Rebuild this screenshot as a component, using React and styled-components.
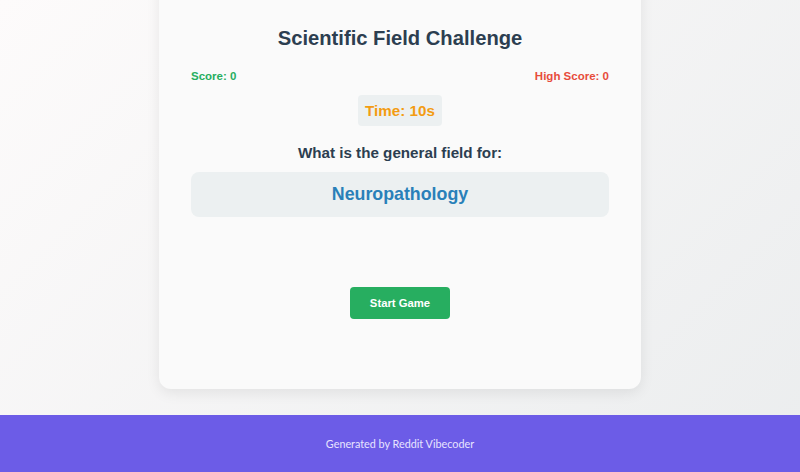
import React from 'react'
import styled, { createGlobalStyle } from 'styled-components'

const GlobalStyle = createGlobalStyle`
  html, body {
    margin: 0;
    padding: 0;
  }
  body {
    font-family: "Liberation Sans", Arial, sans-serif;
    background: linear-gradient(135deg, #fdfbfb 0%, #ebedee 100%);
    min-height: 100vh;
  }
`

const Page = styled.div`
  display: flex;
  flex-direction: column;
  height: 472px;
  overflow: hidden;
`

const Main = styled.main`
  height: 415px;
  overflow: hidden;
`

const Card = styled.section`
  width: 482px;
  box-sizing: border-box;
  margin: -26px auto 0;
  padding: 51px 32px 70px;
  background: #fafafa;
  border-radius: 12px;
  box-shadow: 0 4px 14px rgba(0, 0, 0, 0.08);
  display: flex;
  flex-direction: column;
  align-items: center;
`

const Title = styled.h1`
  margin: 0;
  font-size: 20.2px;
  line-height: 26px;
  color: #2c3e50;
`

const ScoreRow = styled.div`
  align-self: stretch;
  display: flex;
  justify-content: space-between;
  margin-top: 17px;
  font-size: 11.5px;
  line-height: 16px;
  font-weight: bold;
`

const Score = styled.span`
  color: ${p => p.$color};
`

const Timer = styled.div`
  margin-top: 11px;
  padding: 5px 7px;
  background: #ecf0f1;
  border-radius: 4px;
  color: #f39c12;
  font-size: 15.2px;
  line-height: 21px;
  font-weight: bold;
`

const Question = styled.h2`
  margin: 17px 0 0;
  font-size: 15.2px;
  line-height: 20px;
  color: #2c3e50;
`

const Term = styled.div`
  align-self: stretch;
  margin-top: 9px;
  padding: 10px;
  background: #ecf0f1;
  border-radius: 8px;
  text-align: center;
  color: #2980b9;
  font-size: 17.8px;
  line-height: 25px;
  font-weight: bold;
`

const StartButton = styled.button`
  margin-top: 70px;
  padding: 8px 19.5px;
  border: none;
  border-radius: 4px;
  background: #27ae60;
  color: #fff;
  font-family: inherit;
  font-size: 11.3px;
  line-height: 16px;
  font-weight: bold;
  cursor: pointer;
`

const Footer = styled.footer`
  height: 57px;
  background: #6c5ce7;
  display: flex;
  align-items: center;
  justify-content: center;
  color: #e8e4ff;
  font-family: Lato, "Noto Sans", sans-serif;
  font-size: 10.8px;
`

export default function App() {
  return (
    <Page>
      <GlobalStyle />
      <Main>
        <Card>
          <Title>Scientific Field Challenge</Title>
          <ScoreRow>
            <Score $color="#27ae60">Score: 0</Score>
            <Score $color="#e74c3c">High Score: 0</Score>
          </ScoreRow>
          <Timer>Time: 10s</Timer>
          <Question>What is the general field for:</Question>
          <Term>Neuropathology</Term>
          <StartButton>Start Game</StartButton>
        </Card>
      </Main>
      <Footer>Generated by Reddit Vibecoder</Footer>
    </Page>
  )
}
